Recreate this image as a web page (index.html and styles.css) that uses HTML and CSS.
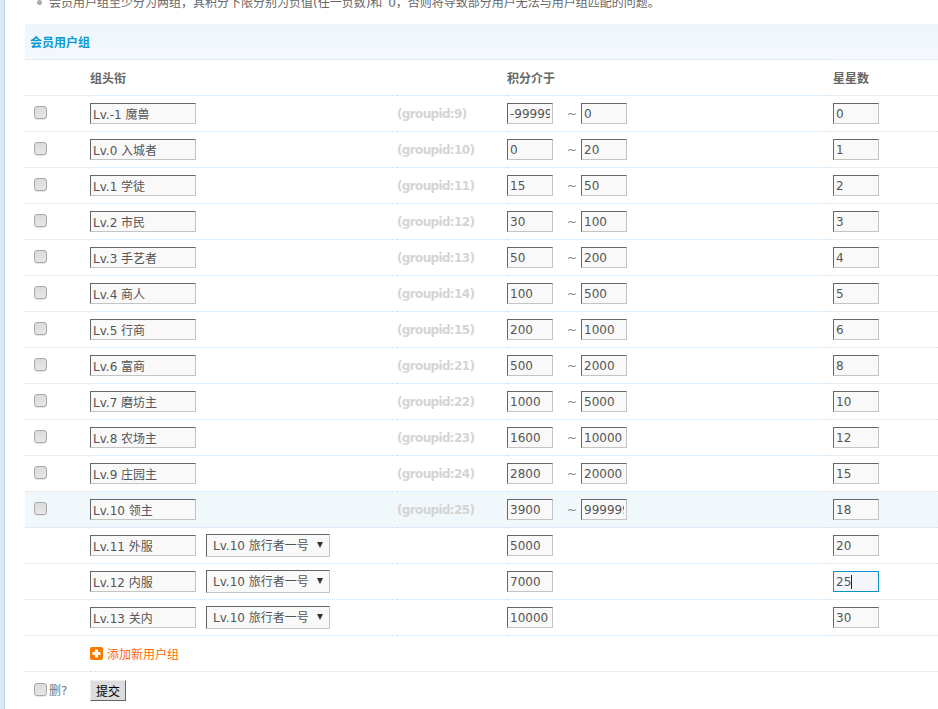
FILE: index.html
```html
<!DOCTYPE html>
<html lang="zh">
<head>
<meta charset="utf-8">
<title>会员用户组</title>
<link rel="stylesheet" href="styles.css">
</head>
<body>
<div class="page">
  <div class="rail"></div>
  <main class="main">
    <ul class="notes">
      <li>会员用户组至少分为两组，其积分下限分别为负值(任一负数)和 0，否则将导致部分用户无法与用户组匹配的问题。</li>
    </ul>
    <table class="groups">
      <colgroup><col class="c-check"><col class="c-name"><col class="c-id"><col class="c-points"><col class="c-stars"></colgroup>
      <tr class="title"><td colspan="4">会员用户组</td><td class="solid"></td></tr>
      <tr class="head"><td></td><td>组头衔</td><td></td><td>积分介于</td><td>星星数</td></tr>
      <tr><td><input class="check" type="checkbox"></td><td><input class="field wide" value="Lv.-1 魔兽"></td><td class="gid">(groupid:9)</td><td><input class="field" value="-999999"><span class="tilde">~</span><input class="field" value="0"></td><td><input class="field" value="0"></td></tr>
      <tr><td><input class="check" type="checkbox"></td><td><input class="field wide" value="Lv.0 入城者"></td><td class="gid">(groupid:10)</td><td><input class="field" value="0"><span class="tilde">~</span><input class="field" value="20"></td><td><input class="field" value="1"></td></tr>
      <tr><td><input class="check" type="checkbox"></td><td><input class="field wide" value="Lv.1 学徒"></td><td class="gid">(groupid:11)</td><td><input class="field" value="15"><span class="tilde">~</span><input class="field" value="50"></td><td><input class="field" value="2"></td></tr>
      <tr><td><input class="check" type="checkbox"></td><td><input class="field wide" value="Lv.2 市民"></td><td class="gid">(groupid:12)</td><td><input class="field" value="30"><span class="tilde">~</span><input class="field" value="100"></td><td><input class="field" value="3"></td></tr>
      <tr><td><input class="check" type="checkbox"></td><td><input class="field wide" value="Lv.3 手艺者"></td><td class="gid">(groupid:13)</td><td><input class="field" value="50"><span class="tilde">~</span><input class="field" value="200"></td><td><input class="field" value="4"></td></tr>
      <tr><td><input class="check" type="checkbox"></td><td><input class="field wide" value="Lv.4 商人"></td><td class="gid">(groupid:14)</td><td><input class="field" value="100"><span class="tilde">~</span><input class="field" value="500"></td><td><input class="field" value="5"></td></tr>
      <tr><td><input class="check" type="checkbox"></td><td><input class="field wide" value="Lv.5 行商"></td><td class="gid">(groupid:15)</td><td><input class="field" value="200"><span class="tilde">~</span><input class="field" value="1000"></td><td><input class="field" value="6"></td></tr>
      <tr><td><input class="check" type="checkbox"></td><td><input class="field wide" value="Lv.6 富商"></td><td class="gid">(groupid:21)</td><td><input class="field" value="500"><span class="tilde">~</span><input class="field" value="2000"></td><td><input class="field" value="8"></td></tr>
      <tr><td><input class="check" type="checkbox"></td><td><input class="field wide" value="Lv.7 磨坊主"></td><td class="gid">(groupid:22)</td><td><input class="field" value="1000"><span class="tilde">~</span><input class="field" value="5000"></td><td><input class="field" value="10"></td></tr>
      <tr><td><input class="check" type="checkbox"></td><td><input class="field wide" value="Lv.8 农场主"></td><td class="gid">(groupid:23)</td><td><input class="field" value="1600"><span class="tilde">~</span><input class="field" value="10000"></td><td><input class="field" value="12"></td></tr>
      <tr><td><input class="check" type="checkbox"></td><td><input class="field wide" value="Lv.9 庄园主"></td><td class="gid">(groupid:24)</td><td><input class="field" value="2800"><span class="tilde">~</span><input class="field" value="20000"></td><td><input class="field" value="15"></td></tr>
      <tr class="hover"><td><input class="check" type="checkbox"></td><td><input class="field wide" value="Lv.10 领主"></td><td class="gid">(groupid:25)</td><td><input class="field" value="3900"><span class="tilde">~</span><input class="field" value="999999"></td><td><input class="field" value="18"></td></tr>
      <tr><td></td><td><input class="field wide" value="Lv.11 外服"><span class="pick"><select class="picker"><option>Lv.10 旅行者一号</option></select></span></td><td></td><td><input class="field" value="5000"></td><td><input class="field" value="20"></td></tr>
      <tr><td></td><td><input class="field wide" value="Lv.12 内服"><span class="pick"><select class="picker"><option>Lv.10 旅行者一号</option></select></span></td><td></td><td><input class="field" value="7000"></td><td><span class="caret-wrap"><input class="field focused" value="25"><span class="caret"></span></span></td></tr>
      <tr><td></td><td><input class="field wide" value="Lv.13 关内"><span class="pick"><select class="picker"><option>Lv.10 旅行者一号</option></select></span></td><td></td><td><input class="field" value="10000"></td><td class="solid"><input class="field" value="30"></td></tr>
      <tr><td></td><td colspan="4"><a class="add" href="#"><svg class="add-icon" width="13" height="13" viewBox="0 0 13 13"><rect width="13" height="13" rx="2" fill="#f57a00"/><path d="M5 2.5h3V5h2.5v3H8v2.5H5V8H2.5V5H5z" fill="#fff"/></svg>添加新用户组</a></td></tr>
      <tr class="foot"><td><label class="del"><input class="check" type="checkbox">删?</label></td><td colspan="4" class="foot-action"><button class="submit" type="button">提交</button></td></tr>
    </table>
  </main>
</div>
</body>
</html>
```
FILE: styles.css
```css
html, body {
  margin: 0;
  height: 709px;
  overflow: hidden;
  background: #fff;
}
body, input, select, button {
  font-family: "DejaVu Sans", "Noto Sans CJK SC", sans-serif;
  font-size: 12px;
  color: #666;
}
.page {
  display: flex;
  height: 709px;
}
.rail {
  flex: 0 0 4px;
  background: #d9eaf6;
  border-right: 1px solid #b5d6ea;
}
.main {
  flex: 1;
  min-width: 0;
  padding-left: 20px;
}
.notes {
  margin: -9px 0 0;
  height: 33px;
  padding: 0 0 0 24px;
  line-height: 24px;
  list-style: none;
  white-space: nowrap;
  word-spacing: 2px;
  color: #666;
}
.notes li {
  position: relative;
}
.notes li::before {
  content: "";
  position: absolute;
  left: -12px;
  top: 9px;
  width: 5px;
  height: 5px;
  border-radius: 50%;
  background: #aaa;
}
.groups {
  width: 913px;
  table-layout: fixed;
  border-collapse: separate;
  border-spacing: 0;
}
.c-check { width: 65px; }
.c-name { width: 307px; }
.c-id { width: 110px; }
.c-points { width: 320px; }
.c-stars { width: 111px; }
.groups td {
  height: 35px;
  padding: 0;
  border-bottom: 1px dotted #cfe0ee;
  vertical-align: middle;
  white-space: nowrap;
}
.groups td:nth-child(5) {
  padding-left: 6px;
}
.groups td.solid {
  border-bottom: 1px solid #e4edf5;
}
.title td {
  font-weight: bold;
  color: #0a9bcf;
  background: linear-gradient(#edf5fc, #f5f9fe);
}
.title td:first-child {
  padding-left: 5px;
}
.head td {
  font-weight: bold;
  color: #666;
}
.hover td {
  background: #f1f8fc;
}
.groups td.gid {
  font-weight: bold;
  letter-spacing: -0.65px;
  color: #d4d4d4;
}
.field {
  box-sizing: border-box;
  width: 46px;
  height: 21px;
  margin: 0;
  padding: 0 2px;
  border: 1px solid;
  border-color: #666 #c4c4c4 #c4c4c4 #666;
  border-radius: 0;
  outline: 0;
  background: #f9f9f9;
  color: #555;
  vertical-align: middle;
}
.wide {
  width: 106px;
}
.focused {
  border-color: #0a94c6;
  background: #f4f8fd;
}
.caret-wrap {
  position: relative;
  display: inline-block;
  vertical-align: middle;
  line-height: 0;
}
.caret {
  position: absolute;
  left: 18px;
  top: 4px;
  width: 1px;
  height: 14px;
  background: #222;
}
.tilde {
  display: inline-block;
  width: 28px;
  padding-right: 4px;
  box-sizing: border-box;
  text-align: right;
  color: #888;
  vertical-align: middle;
}
.pick {
  position: relative;
  display: inline-block;
  margin-left: 10px;
  vertical-align: middle;
  line-height: 0;
}
.pick::after {
  content: "";
  position: absolute;
  left: 111px;
  top: 8px;
  border-style: solid;
  border-width: 6px 3px 0;
  border-color: #333 transparent transparent;
  pointer-events: none;
}
.picker {
  box-sizing: border-box;
  width: 124px;
  height: 23px;
  margin: 0;
  padding: 0 0 0 6px;
  appearance: none;
  border: 1px solid;
  border-color: #666 #c4c4c4 #c4c4c4 #666;
  border-radius: 0;
  background: #f9f9f9;
  color: #555;
}
.check {
  display: block;
  box-sizing: border-box;
  width: 13px;
  height: 13px;
  margin: -2px 0 0 9px;
  appearance: none;
  border: 1px solid #a8a8a8;
  border-radius: 3px;
  background: linear-gradient(#dcdcdc, #e6e6e6);
  box-shadow: 0 1px 0 #e8e8e8;
}
.add {
  display: inline-flex;
  align-items: center;
  color: #f60;
  text-decoration: none;
}
.add-icon {
  margin-right: 4px;
}
.groups .foot td {
  border-bottom: 0;
}
.groups .foot-action {
  padding-top: 1px;
}
.del {
  display: inline-flex;
  align-items: center;
  gap: 2px;
  color: #777;
}
.del .check {
  margin: 0 0 0 9px;
}
.submit {
  box-sizing: border-box;
  width: 36px;
  height: 21px;
  margin: 0;
  padding: 0;
  border: 1px solid;
  border-color: #eee #666 #666 #eee;
  border-radius: 0;
  background: #ddd;
  color: #000;
  vertical-align: middle;
}
```
